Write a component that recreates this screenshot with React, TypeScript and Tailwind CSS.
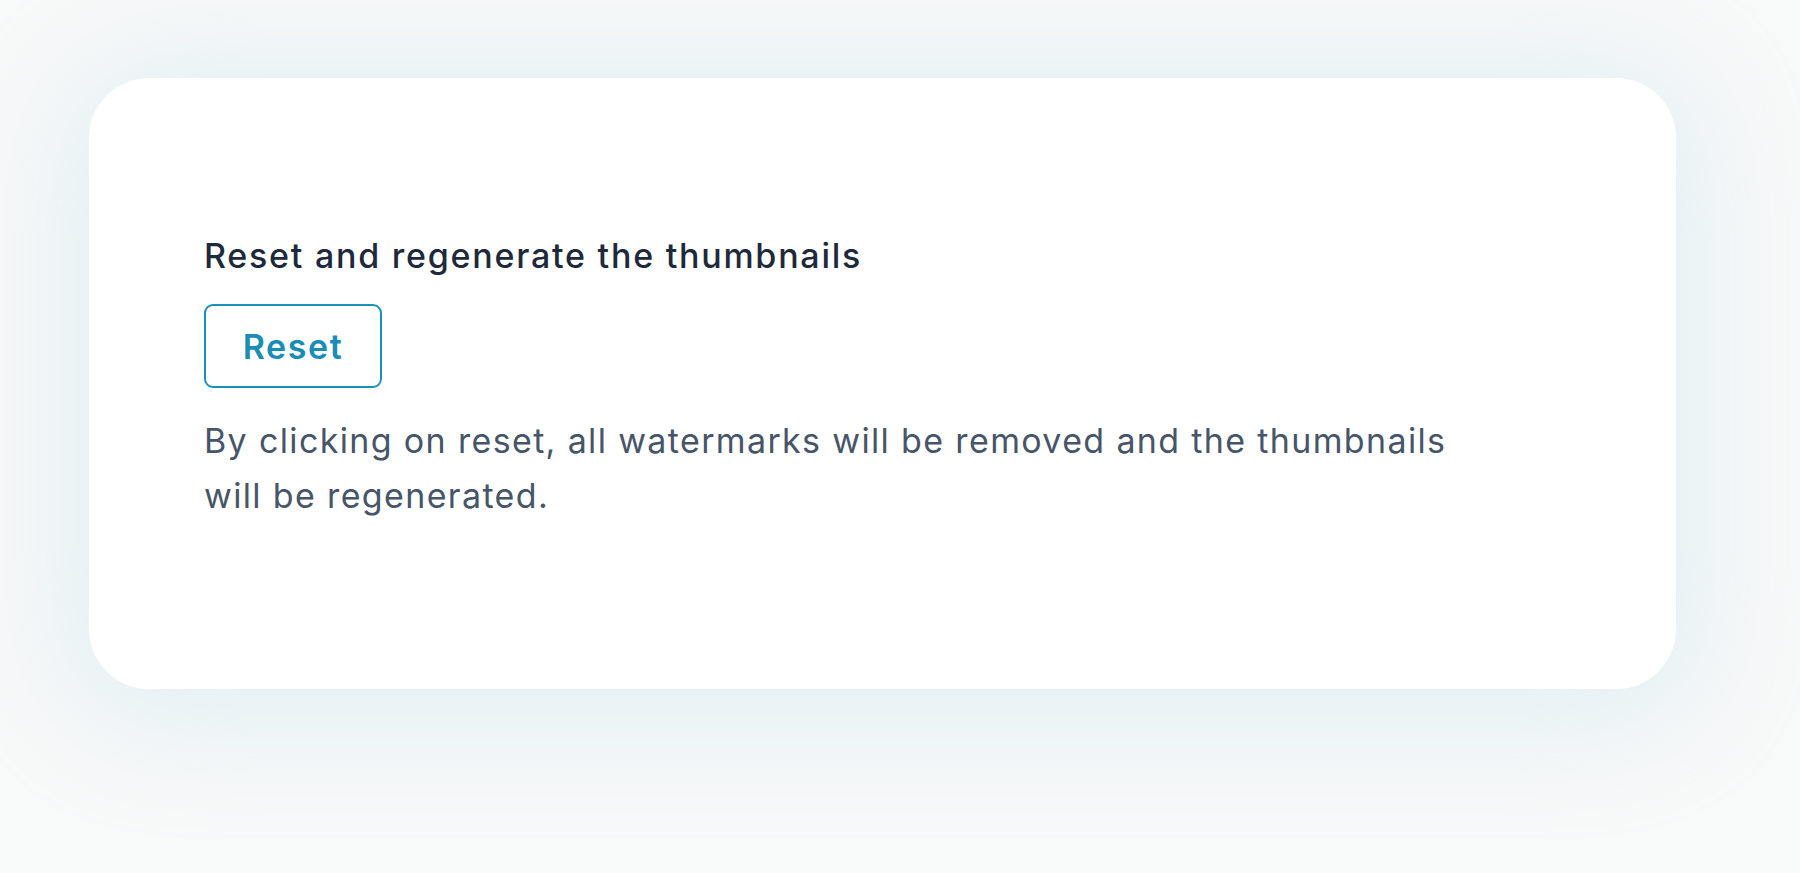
import React from "react";

export default function App() {
  return (
    <div
      className="w-[1800px] h-[873px] overflow-hidden bg-[#f8f9f9]"
      style={{ fontFamily: "Inter, 'Noto Sans', sans-serif" }}
    >
      <div className="pt-[78px] pl-[89px]">
        <div className="w-[1587px] h-[611px] bg-white rounded-[60px] shadow-[0_10px_120px_20px_rgba(198,226,238,0.45)] pl-[115px] pt-[158px]">
          <h2 className="text-[34px] leading-[40px] font-medium text-[#1e293b] tracking-[1.75px]">
            Reset and regenerate the thumbnails
          </h2>
          <button className="mt-[28px] w-[178px] h-[84px] flex items-center justify-center rounded-[9px] border-2 border-[#1a90b8] text-[#1a8db6] text-[34px] font-semibold tracking-[1.6px] bg-white">
            Reset
          </button>
          <p className="mt-[25px] max-w-[1290px] text-[34px] leading-[55px] text-[#475569] tracking-[1.35px]">
            By clicking on reset, all watermarks will be removed and the thumbnails will be regenerated.
          </p>
        </div>
      </div>
    </div>
  );
}
